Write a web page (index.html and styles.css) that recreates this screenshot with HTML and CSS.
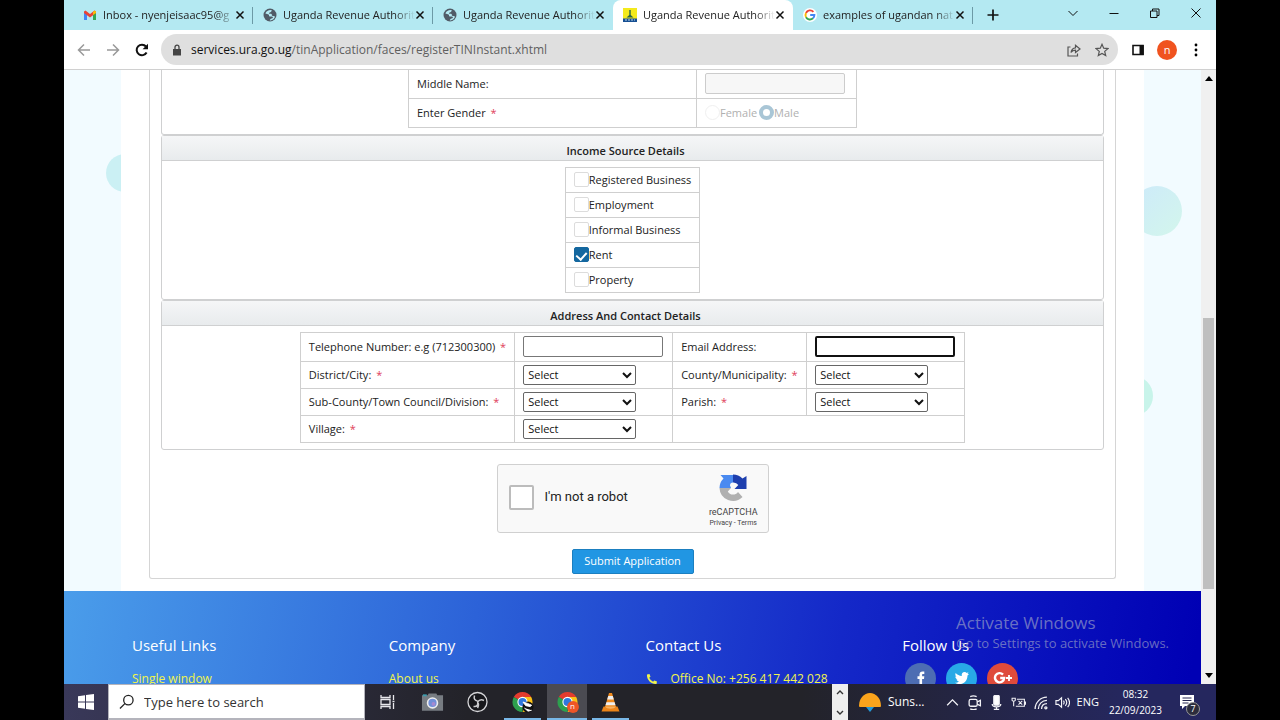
FILE: index.html
```html
<!DOCTYPE html>
<html lang="en">
<head>
<meta charset="utf-8">
<title>Uganda Revenue Authority</title>
<link rel="stylesheet" href="styles.css">
</head>
<body>
<svg class="defs" aria-hidden="true">
  <symbol id="globe" viewBox="0 0 14 14"><circle cx="7" cy="7" r="6.500" fill="#505a66"/><path d="M8.500 2C5.500 1.800 3 3 2.400 5.600c1 .6 2.300.4 3.200 1 .8.600 0 1.600 1 1.900 1.300.3 2.700-.6 3.300.6.300.8-.6 1.300-1.300 1.500-1 .2-1.600 1-1.800 1.800 2.700.2 4.700-1.400 5.200-3.800-1-.8-2.200-.3-3-1.100-.5-.6.300-1.300-.6-1.600-.8-.3-2 .3-2.400-.5-.3-.9 1.300-1 1.900-1.500.6-.4.900-1.200.6-1.900z" fill="#b4e9f2"/></symbol>
  <symbol id="close" viewBox="0 0 10 10"><path d="M1.500 1.500l7 7M8.500 1.500l-7 7" stroke="#111" stroke-width="1.500"/></symbol>
  <symbol id="chrome" viewBox="0 0 24 24"><path d="M12 12L2.500 6.500A11 11 0 0 1 21.500 6.500z" fill="#e33b2e"/><path d="M12 12V23A11 11 0 0 1 2.500 6.500z" fill="#2da04e"/><path d="M12 6.500H21.500A11 11 0 0 1 12 23l4.500-8.200z" fill="#fbc116"/><circle cx="12" cy="12" r="5.600" fill="#fff"/><circle cx="12" cy="12" r="4.400" fill="#2f78dd"/></symbol>
</svg>
<div class="screen">
  <header class="tabs">
    <div class="tab"><svg class="fav" viewBox="0 0 14 14"><path d="M1 12V4l3 2v6z" fill="#4285f4"/><path d="M10 6l3-2v8h-3z" fill="#34a853"/><path d="M1 3.500L2.500 2.500 7 6l4.500-3.500L13 3.500V5L7 9.400 1 5z" fill="#ea4335"/><path d="M10 4l1.500-1.500L13 3.500V5l-3 2z" fill="#fbbc04"/></svg><span class="tab-title">Inbox - nyenjeisaac95@g</span><button class="x" aria-label="Close tab"><svg><use href="#close"/></svg></button></div>
    <div class="tab"><svg class="fav"><use href="#globe"/></svg><span class="tab-title">Uganda Revenue Authorit</span><button class="x" aria-label="Close tab"><svg><use href="#close"/></svg></button></div>
    <div class="tab before-active"><svg class="fav"><use href="#globe"/></svg><span class="tab-title">Uganda Revenue Authorit</span><button class="x" aria-label="Close tab"><svg><use href="#close"/></svg></button></div>
    <div class="tab active"><svg class="fav" viewBox="0 0 14 14"><path d="M0 0h14v14H0z" fill="#f4ea1c"/><path d="M0 10.500h14V14H0z" fill="#174f93"/><path d="M6.300 2h1.400v5l2.800 2.500h-7L6.300 7z" fill="#276447"/><path d="M2 12h10" stroke="#b9d8ea" stroke-width="1.200" stroke-dasharray="2 1"/></svg><span class="tab-title">Uganda Revenue Authorit</span><button class="x" aria-label="Close tab"><svg><use href="#close"/></svg></button></div>
    <div class="tab"><svg class="fav" viewBox="0 0 14 14"><circle cx="7" cy="7" r="7" fill="#fff"/><g fill="none" stroke-width="1.900"><path d="M10.400 3.800A4.500 4.500 0 0 0 3 5" stroke="#ea4335"/><path d="M3 5a4.500 4.500 0 0 0 0 4.200" stroke="#fbbc04"/><path d="M3 9.200A4.500 4.500 0 0 0 10 10.300" stroke="#34a853"/><path d="M10 10.300A4.500 4.500 0 0 0 11.400 7H7.200" stroke="#4285f4"/></g></svg><span class="tab-title">examples of ugandan nat</span><button class="x" aria-label="Close tab"><svg><use href="#close"/></svg></button></div>
    <button class="new-tab" aria-label="New tab"><svg viewBox="0 0 12 12"><path d="M6 .5v11M.5 6h11" stroke="#111" stroke-width="1.700"/></svg></button>
    <div class="win">
      <button aria-label="Search tabs"><svg viewBox="0 0 12 12"><path d="M1.500 4L6 8.500 10.500 4"/></svg></button>
      <button aria-label="Minimize"><svg viewBox="0 0 12 12"><path d="M1.500 6.500h9"/></svg></button>
      <button aria-label="Restore"><svg viewBox="0 0 12 12"><path d="M1.500 4h6.500v6.500H1.500zM3.500 4V2H10v6.500H8"/></svg></button>
      <button aria-label="Close"><svg viewBox="0 0 12 12"><path d="M1.500 1.500l9 9M10.500 1.500l-9 9"/></svg></button>
    </div>
  </header>
  <div class="toolbar">
    <button class="nav" aria-label="Back"><svg viewBox="0 0 14 14"><path d="M13 7H1.500M7 1.500L1.500 7 7 12.500" stroke="#999"/></svg></button>
    <button class="nav" aria-label="Forward"><svg viewBox="0 0 14 14"><path d="M1 7h11.500M7 1.500L12.500 7 7 12.500" stroke="#999"/></svg></button>
    <button class="nav" aria-label="Reload"><svg viewBox="0 0 14 14"><path d="M11.600 9.500A5.300 5.300 0 1 1 11 3.500" stroke="#111" stroke-width="2"/><path d="M13 .8v5.400H7.600z" fill="#111"/></svg></button>
    <div class="omnibox">
      <svg class="lock" viewBox="0 0 10 12"><path d="M1 5h8v6.500H1z" fill="#444"/><path d="M3 5V3.200a2 2 0 0 1 4 0V5" fill="none" stroke="#444" stroke-width="1.300"/></svg>
      <div class="url"><b>services.ura.go.ug</b>/tinApplication/faces/registerTINInstant.xhtml</div>
      <button aria-label="Share"><svg viewBox="0 0 14 14"><path d="M3.500 4H1v9h9.500v-2.500M4 9.500C4.500 6.500 6 5 8.500 4.800V2.200L13 6 8.500 9.500V7.200C6.500 7.200 5 8 4 9.500z"/></svg></button>
      <button aria-label="Bookmark"><svg viewBox="0 0 14 14"><path d="M7 1.300l1.700 3.900 4.200.4-3.200 2.800 1 4.200L7 10.400l-3.700 2.200 1-4.200L1.100 5.600l4.200-.4z"/></svg></button>
    </div>
    <button class="side" aria-label="Side panel"><svg viewBox="0 0 14 14"><path d="M2 2.500h10v9H2z" fill="none" stroke="#111" stroke-width="1.600"/><path d="M8.500 2h4.200v10H8.500z" fill="#111"/></svg></button>
    <button class="avatar">n</button>
    <button class="dots" aria-label="Menu"><svg viewBox="0 0 4 14"><circle cx="2" cy="2" r="1.400"/><circle cx="2" cy="7" r="1.400"/><circle cx="2" cy="12" r="1.400"/></svg></button>
  </div>
  <div class="viewport">
    <div class="page">
      <main class="backdrop">
        <svg class="bubbles left" viewBox="0 0 57 521"><circle cx="61" cy="103" r="19" fill="#cbf0f4"/></svg>
        <svg class="bubbles right" viewBox="0 0 57 521"><defs><linearGradient id="bub" x2="1" y2="1"><stop stop-color="#cdeafa"/><stop offset="1" stop-color="#d3f6ec"/></linearGradient></defs><circle cx="13" cy="141" r="25" fill="url(#bub)"/><circle cx="-11" cy="326" r="20" fill="#c8f4ea"/></svg>
        <div class="sheet">
          <form class="card" onsubmit="return false">
            <section class="panel first">
              <table class="grid names">
                <tr><td class="wide"><label for="mid">Middle Name:</label></td><td><input id="mid" type="text" class="text" disabled></td></tr>
                <tr><td>Enter Gender <i>*</i></td><td><div class="gender"><label><input type="radio" name="g" disabled>Female</label><label><input type="radio" name="g" checked disabled>Male</label></div></td></tr>
              </table>
            </section>
            <section class="panel">
              <h2>Income Source Details</h2>
              <table class="grid sources">
                <tr><td><label><input type="checkbox">Registered Business</label></td></tr>
                <tr><td><label><input type="checkbox">Employment</label></td></tr>
                <tr><td><label><input type="checkbox">Informal Business</label></td></tr>
                <tr><td><label><input type="checkbox" checked>Rent</label></td></tr>
                <tr><td><label><input type="checkbox">Property</label></td></tr>
              </table>
            </section>
            <section class="panel">
              <h2>Address And Contact Details</h2>
              <table class="grid address">
                <tr><td class="c1"><label for="tel">Telephone Number: e.g (712300300) <i>*</i></label></td><td class="c2"><input id="tel" type="text" class="text"></td><td class="c3"><label for="mail">Email Address:</label></td><td class="c2"><input id="mail" type="text" class="text focused"></td></tr>
                <tr><td><label for="dis">District/City: <i>*</i></label></td><td><select id="dis"><option>Select</option></select></td><td><label for="cou">County/Municipality: <i>*</i></label></td><td><select id="cou"><option>Select</option></select></td></tr>
                <tr><td><label for="sub">Sub-County/Town Council/Division: <i>*</i></label></td><td><select id="sub"><option>Select</option></select></td><td><label for="par">Parish: <i>*</i></label></td><td><select id="par"><option>Select</option></select></td></tr>
                <tr><td><label for="vil">Village: <i>*</i></label></td><td><select id="vil"><option>Select</option></select></td><td colspan="2"></td></tr>
              </table>
            </section>
            <div class="captcha">
              <label><input type="checkbox">I'm not a robot</label>
              <div class="brand">
                <svg viewBox="0 0 30 30"><path d="M1.500 15A13.500 13.500 0 0 1 5.500 5.500L2.500 2H15v7.500a3 3 0 0 0-3 3l1 2.500z" fill="#4a8af0"/><path d="M15 1.500a13.500 13.500 0 0 1 9.500 4L28.500 3v13H16.500l3.800-4A6 6 0 0 0 15 9.500z" fill="#1e3fae"/><path d="M1.500 15H13l-3.200 3.500A6 6 0 0 0 20 19l4.500 5A13.500 13.500 0 0 1 1.500 15z" fill="#b0b0b0"/></svg>
                <span class="name">reCAPTCHA</span>
                <span class="terms"><a href="#">Privacy</a> - <a href="#">Terms</a></span>
              </div>
            </div>
            <button class="submit">Submit Application</button>
          </form>
        </div>
      </main>
      <footer class="footer">
        <div><h3>Useful Links</h3><a href="#">Single window</a></div>
        <div><h3>Company</h3><a href="#">About us</a></div>
        <div><h3>Contact Us</h3><p><svg viewBox="0 0 12 12"><path d="M1 1.500L3.500 1l1 2.800-1.300 1a7 7 0 0 0 3.900 3.900l1.100-1.300 2.800 1-.5 2.500C5.500 11.500.5 7 1 1.500z" fill="#f1f44a"/></svg>Office No: +256 417 442 028</p></div>
        <div><h3>Follow Us</h3>
          <div class="social">
            <a href="#" class="fb" aria-label="Facebook"><svg viewBox="0 0 16 16"><path d="M6.500 15V9H4.500V6.300h2V4.700C6.500 2.500 7.600 1.500 9.600 1.500h1.700V4H10c-.7 0-.9.300-.9 1v1.300h2.200L11 9H9.100v6z" fill="#fff"/></svg></a>
            <a href="#" class="tw" aria-label="Twitter"><svg viewBox="0 0 16 16"><path d="M15 4l-1.500 1.400C13.500 10.500 10 14 5.500 14 3.800 14 2.200 13.500 1 12.700c1.500.1 3-.3 4-1.200-1.300-.1-2.200-.9-2.500-2h1.100C2.200 9 1.300 7.900 1.300 6.500l1.200.3C1.300 5.800 1 4.200 1.700 2.900 3.200 4.700 5.300 5.700 7.800 5.900 7.300 3.600 8.800 2 10.600 2c.9 0 1.600.3 2.100.9l1.800-.7-1 1.600z" fill="#fff"/></svg></a>
            <a href="#" class="gp" aria-label="Google Plus"><svg viewBox="0 0 20 16"><path d="M10 4.600A4.600 4.600 0 1 0 11.200 8H7.200" fill="none" stroke="#fff" stroke-width="2.400"/><path d="M16 5v6M13 8h6" stroke="#fff" stroke-width="1.800"/></svg></a>
          </div>
        </div>
        <div class="watermark"><strong>Activate Windows</strong><span>Go to Settings to activate Windows.</span></div>
      </footer>
    </div>
    <div class="scroll"><svg viewBox="0 0 8 5"><path d="M4 0l4 5H0z"/></svg><div class="thumb"></div><svg viewBox="0 0 8 5"><path d="M4 5l4-5H0z"/></svg></div>
  </div>
  <div class="taskbar">
    <button class="start" aria-label="Start"><svg viewBox="0 0 16 16"><path d="M0 2.300l7-1V7.500H0zM8 1.100L16 0v7.500H8zM0 8.500h7v6.200l-7-1zM8 8.500h8V16l-8-1.100z" fill="#fff"/></svg></button>
    <label class="search"><svg viewBox="0 0 16 16"><circle cx="10" cy="6" r="5"/><path d="M6.500 9.500L1 15"/></svg><input type="text" placeholder="Type here to search" aria-label="Search"></label>
    <button class="app" aria-label="Task view"><svg viewBox="0 0 16 16" fill="none" stroke="#e8e8ec" stroke-width="1.300"><path d="M1 1v2.500h9V1M1 15v-2.500h9V15M1 5.500h9v5H1zM13.500 1v5M13.500 9v6M12.500 7.500h2"/></svg></button>
    <button class="app" aria-label="Camera"><svg class="big" viewBox="0 0 24 20"><path d="M2 3h5l1-2h8l1 2h6v16H1V3z" fill="#777c82"/><path d="M2 2h4v2H2z" fill="#3d9cae"/><circle cx="12" cy="11" r="6" fill="#eee"/><circle cx="12" cy="11" r="4.300" fill="#718fd8"/><circle cx="13" cy="12" r="2" fill="#a68ad0"/></svg></button>
    <button class="app" aria-label="OBS"><svg class="big" viewBox="0 0 22 22"><circle cx="11" cy="11" r="9.500" fill="#17171b" stroke="#d5d5d8" stroke-width="1.300"/><path d="M8 4.500C7 8 8.500 9.500 11 10M17.500 9.500c-3-1.500-5-.5-6.500 1.500M7 15.500c4 .5 5-2 4-5.500M11 11c1.500 2 1.500 3.500 0 6" fill="none" stroke="#c9c9cc" stroke-width="1.500"/></svg></button>
    <button class="app open" aria-label="Chrome"><svg class="big" viewBox="0 0 24 24"><use href="#chrome"/><circle cx="18" cy="17.500" r="6" fill="#111"/><path d="M12.500 12l5 1.500 4.500 2-1.500 1.500-5-1zM14 18.500l4 3.500 4-1" fill="#fff" stroke="#fff"/></svg></button>
    <button class="app open current" aria-label="Chrome, profile n"><svg class="big" viewBox="0 0 24 24"><use href="#chrome"/><circle cx="18" cy="17.500" r="6.500" fill="#ee5527"/></svg><span class="profile">n</span></button>
    <button class="app open" aria-label="VLC"><svg class="big" viewBox="0 0 22 22"><path d="M9.500 2h3l4 14h-11z" fill="#f18b1d"/><path d="M8.700 5h4.600l1 3.500H7.700zM6.900 11.200h8.200l.9 3H6z" fill="#eee"/><path d="M4 15.500h14l2 5H2z" fill="#ec8419"/><path d="M5.500 15.500h11c-2 3-9 3-11 0z" fill="#f7b160"/></svg></button>
    <div class="updown"><svg viewBox="0 0 8 6"><path d="M1 5l3-3 3 3"/></svg><svg viewBox="0 0 8 6"><path d="M1 1l3 3 3-3"/></svg></div>
    <div class="weather"><svg viewBox="0 0 24 24"><path d="M8 17h8l-4 5z" fill="#2599d8"/><path d="M1 16a11 13 0 0 1 22 0q0 1-1 1H2q-1 0-1-1z" fill="#fba41c"/></svg>Suns...</div>
    <div class="tray">
      <svg viewBox="0 0 14 14"><path d="M2 9.500l5-5 5 5"/></svg>
      <svg viewBox="0 0 14 14"><rect x="2" y="4" width="7.500" height="6.500" rx="1.500"/><path d="M9.500 6.500l3-1.500v5l-3-1.500M3 1.500q3-1.500 6 0M3 13q3 1.500 6 0"/></svg>
      <svg viewBox="0 0 14 14"><rect x="4.500" y="0.500" width="5" height="9" rx="1" fill="#fff"/><path d="M3 8.500c0 3.500 8 3.500 8 0M7 11.500V13.500M4.500 13.500h5"/></svg>
      <svg viewBox="0 0 14 14"><path d="M5.500 4h7v6.500h-8M1 3v2q1.500 1.500 3 0V3zM2.500 6v4.500M7 5.500l3.500 3.500M10.500 5.500L7 9M13.500 6v3" stroke-width="1"/></svg>
      <svg viewBox="0 0 14 14"><path d="M2 13C2 7 7 2 13 2M5 13c0-4.500 3.500-8 8-8M8 13c0-3 2-5 5-5"/><circle cx="12" cy="12" r="1"/></svg>
      <svg viewBox="0 0 16 14"><path d="M1 5h2.500L7 2v10L3.500 9H1zM9 5q1.500 2 0 4M11 3.500q3 3.500 0 7M13.500 2q4 5 0 10"/></svg>
    </div>
    <span class="lang">ENG</span>
    <div class="clock"><span>08:32</span><span>22/09/2023</span></div>
    <button class="notes" aria-label="Notifications"><svg viewBox="0 0 16 16"><path d="M1 1h14v11H6l-3 3v-3H1z" fill="#fff"/><path d="M3.500 4h9M3.500 6.500h9M3.500 9h6" stroke="#262750"/></svg><span>7</span></button>
  </div>
</div>
</body>
</html>
```
FILE: styles.css
```css
* { box-sizing: border-box; }
body {
  margin: 0;
  background: #000;
  color: #222;
  font: 12px/16px "Open Sans", "Noto Sans", sans-serif;
}
button { padding: 0; border: 0; background: none; font: inherit; color: inherit; }
input, select { font: inherit; margin: 0; }
svg { display: block; }
.defs { position: absolute; width: 0; height: 0; }
.screen {
  height: 100vh;
  margin: 0 5%;
  display: flex;
  flex-direction: column;
  background: #fff;
  overflow: hidden;
}

/* browser tabs */
.tabs { flex: none; height: 30px; display: flex; padding-left: 9px; background: #b4e9f2; }
.tab {
  flex: 0 1 180px;
  min-width: 0;
  display: flex;
  align-items: center;
  padding: 0 8px 0 10px;
  position: relative;
  font-size: 11px;
}
.tab::after { content: ""; position: absolute; right: 0; top: 7px; height: 17px; border-right: 1px solid #6c9aa6; }
.before-active::after, .active::after { display: none; }
.active { background: #fff; border-radius: 8px 8px 0 0; }
.fav { flex: none; width: 14px; height: 14px; margin-right: 6px; }
.tab-title {
  flex: 1;
  white-space: nowrap;
  -webkit-mask-image: linear-gradient(90deg, #000 85%, transparent);
  mask-image: linear-gradient(90deg, #000 85%, transparent);
}
.x { flex: none; }
.x svg { width: 10px; height: 10px; }
.new-tab { width: 40px; display: grid; place-items: center; }
.new-tab svg { width: 12px; height: 12px; }
.win { margin-left: auto; display: flex; height: 26px; }
.win button { width: 41px; display: grid; place-items: center; }
.win svg { width: 12px; height: 12px; fill: none; stroke: #111; }

/* address bar */
.toolbar {
  flex: none;
  height: 40px;
  display: flex;
  align-items: center;
  padding: 0 13px 0 5px;
  border-bottom: 1px solid #d0d0d0;
}
.nav { width: 29px; display: grid; place-items: center; }
.nav svg { width: 14px; height: 14px; fill: none; stroke-width: 1.5; }
.omnibox {
  flex: 1;
  height: 31px;
  margin: 0 13px 0 5px;
  display: flex;
  align-items: center;
  gap: 14px;
  padding: 0 9px 0 11px;
  border-radius: 16px;
  background: #dfdfdf;
}
.lock { width: 10px; height: 12px; }
.url { flex: 1; margin-left: -5px; font-size: 12px; color: #5f5f5f; white-space: nowrap; }
.url b { font-weight: 400; color: #111; }
.omnibox button svg { width: 14px; height: 14px; fill: none; stroke: #555; stroke-width: 1.2; }
.side svg { width: 14px; height: 14px; }
.avatar { width: 20px; height: 20px; margin: 0 12px; border-radius: 50%; background: #f0531f; color: #fff; font-size: 11px; line-height: 18px; }
.dots { width: 14px; }
.dots svg { width: 4px; height: 14px; margin: auto; }

/* web page */
.viewport { flex: 1; min-height: 0; display: flex; }
.page { flex: 1; min-width: 0; overflow: hidden; }
.backdrop { position: relative; padding: 0 57px; background: #f2fbff; }
.bubbles { position: absolute; top: 0; width: 57px; height: 521px; overflow: hidden; }
.left { left: 0; }
.right { right: 0; }
.sheet { padding: 0 28px 12px; background: #fff; }
.card {
  display: flex;
  flex-direction: column;
  padding: 0 11px 4px;
  border: 1px solid #d5d5d5;
  border-top: 0;
  border-radius: 0 0 3px 3px;
}
.panel { border: 1px solid #cfd0d1; border-radius: 3px; padding-bottom: 6px; }
.first { border-top: 0; border-radius: 0 0 3px 3px; }
.panel h2 {
  margin: 0 0 6px;
  padding: 7px 14px 1px 0;
  border-bottom: 1px solid #cfd0d1;
  background: linear-gradient(#f5f6f7, #e8ebed);
  color: #222;
  font-size: 11px;
  font-weight: 600;
  line-height: 16px;
  text-align: center;
}
.grid { margin: 0 auto; border-collapse: collapse; font-size: 11px; line-height: 16px; }
.grid td { padding: 0 8px; border: 1px solid #cfcfcf; }
.grid i { margin-left: 2px; color: #e0405a; font-style: normal; }
.names td { height: 29px; }
.names tr:first-child td { height: 28px; border-top: 0; }
.names .wide { width: 288px; }
.names td + td { width: 160px; }
.gender { display: flex; gap: 2px; color: #b0b0b0; white-space: nowrap; }
.gender label { display: flex; align-items: center; }
.gender input { appearance: none; width: 15px; height: 15px; border: 1px solid #f0f0f0; border-radius: 50%; }
.gender input:checked { border: 4px solid #a9c6d6; }
.text { display: block; width: 140px; height: 21px; padding: 0 4px; border: 1px solid #777; border-radius: 2px; background: #fff; }
.text:disabled { border-color: #ccc; background: #f7f7f7; }
.focused { border: 2px solid #111; outline: 0; }
.sources td { width: 134px; height: 25px; }
.sources label { display: flex; align-items: center; white-space: nowrap; }
.sources input {
  appearance: none;
  flex: none;
  display: grid;
  place-items: center;
  width: 15px;
  height: 15px;
  border: 1px solid #dcdcdc;
  border-radius: 2px;
  background: #fff;
}
.sources input:checked { background: #14679f; border-color: #14679f; }
.sources input:checked::after { content: ""; width: 5px; height: 8px; border: solid #fff; border-width: 0 2px 2px 0; transform: rotate(42deg); }
.address td { height: 27px; white-space: nowrap; }
.address tr:first-child td { height: 29px; }
.address .c1 { width: 212px; }
.address .c2 { width: 158px; }
.address .c3 { width: 134px; }
select { display: block; width: 113px; height: 20px; padding: 0; border: 1px solid #666; border-radius: 2px; background: #fff; color: #111; }
.captcha {
  align-self: center;
  display: flex;
  justify-content: space-between;
  width: 272px;
  height: 69px;
  margin-top: 14px;
  padding: 0 10px 2px 11px;
  border: 1px solid #d0d0d0;
  border-radius: 3px;
  background: #f9f9f9;
}
.captcha label { display: flex; align-items: center; gap: 11px; font: 13px/16px Roboto, sans-serif; }
.captcha input { appearance: none; width: 25px; height: 25px; border: 2px solid #bcbcbc; border-radius: 2px; background: #fff; }
.brand { display: flex; flex-direction: column; align-items: center; padding-top: 8px; color: #444; font: 8px/10px Roboto, sans-serif; }
.brand svg { width: 30px; height: 30px; }
.name { margin-top: 3px; font-size: 9px; line-height: 12px; }
.terms { font-size: 7px; white-space: nowrap; }
.terms a { color: inherit; text-decoration: none; }
.submit {
  align-self: center;
  width: 122px;
  height: 25px;
  margin-top: 16px;
  border: 1px solid #1b7fc0;
  border-radius: 2px;
  background: #2196e3;
  color: #fff;
  font-size: 11px;
}

.footer {
  position: relative;
  display: grid;
  grid-template-columns: repeat(4, 1fr);
  min-height: 300px;
  padding: 44px 42px 0 68px;
  background: linear-gradient(100deg, #4a9dea, #2c62d8 35%, #1428c8 66%, #0000b4 96%);
  color: #fff;
}
.footer h3 { margin: 0 0 16px; font-size: 15px; line-height: 20px; font-weight: 400; }
.footer a, .footer p { margin: 0; color: #f1f44a; font-size: 12px; line-height: 16px; text-decoration: none; }
.footer p { display: flex; align-items: center; gap: 13px; }
.footer p svg { width: 12px; height: 12px; }
.social { display: flex; gap: 10px; margin: -8px 0 0 3px; }
.social a { display: grid; place-items: center; width: 31px; height: 31px; border-radius: 50%; }
.social svg { height: 16px; }
.fb { background: #4d6db3; }
.tw { background: #28a9e6; }
.gp { background: #df4b3b; }
.watermark { position: absolute; top: 21px; right: 32px; color: rgb(160 165 200 / 65%); }
.watermark strong, .watermark span { display: block; font-weight: 400; white-space: nowrap; }
.watermark strong { font-size: 17px; line-height: 22px; }
.watermark span { font-size: 13px; line-height: 19px; }

.scroll { flex: none; width: 15px; display: flex; flex-direction: column; align-items: center; padding: 6px 0; background: #f0f0f0; }
.scroll svg { width: 8px; height: 5px; flex: none; }
.thumb { width: 11px; height: 45%; margin: auto 0 84px; background: #bfbfbf; }

/* taskbar */
.taskbar {
  flex: none;
  height: 36px;
  display: flex;
  align-items: stretch;
  background: linear-gradient(90deg, #393859, #232329 35%, #232329 64%, #25275e 92%);
  color: #fff;
}
.start { width: 44px; display: grid; place-items: center; }
.start svg { width: 16px; height: 16px; }
.search { width: 257px; display: flex; align-items: center; gap: 10px; padding: 0 10px; border: 2px solid #b4b4bc; border-width: 1px 1px 2px; background: #fff; }
.search svg { width: 15px; height: 16px; fill: none; stroke: #222; stroke-width: 1.4; }
.search input { flex: 1; min-width: 0; padding: 0; border: 0; outline: 0; font-size: 13px; }
.search input::placeholder { color: #333; opacity: 1; }
.app { position: relative; width: 45px; display: grid; place-items: center; }
.app svg { width: 16px; height: 16px; }
.app .big { width: 23px; height: 22px; }
.open::after { content: ""; position: absolute; left: 4px; right: 4px; bottom: 0; height: 2px; background: #79b8e8; }
.current { width: 40px; margin: 0 1px 0 2px; background: #4b4b52; }
.current::after { left: 0; right: 0; }
.profile { position: absolute; left: 23px; top: 14px; font-size: 8px; }
.updown { width: 16px; margin-left: auto; display: flex; flex-direction: column; justify-content: space-between; align-items: center; padding: 5px 0 4px; background: #eee; }
.updown svg { width: 8px; height: 6px; fill: none; stroke: #333; stroke-width: 1.4; }
.weather { display: flex; align-items: center; gap: 6px; margin-left: 10px; font-size: 12px; }
.weather svg { width: 24px; height: 24px; }
.tray { display: flex; align-items: center; gap: 7px; margin-left: 20px; }
.tray svg { width: 15px; height: 15px; fill: none; stroke: #f2f2f6; stroke-width: 1.2; }
.lang { align-self: center; margin-left: 7px; font-size: 11px; }
.clock { display: flex; flex-direction: column; justify-content: center; margin-left: 10px; text-align: center; font-size: 10px; line-height: 16px; }
.notes { position: relative; display: grid; place-items: center; width: 33px; margin: 0 13px 0 8px; }
.notes svg { width: 16px; height: 16px; }
.notes span { position: absolute; right: 3px; bottom: 4px; width: 14px; height: 14px; border: 1px solid #999; border-radius: 50%; background: #2b2c3c; font-size: 9px; line-height: 12px; text-align: center; }
```
